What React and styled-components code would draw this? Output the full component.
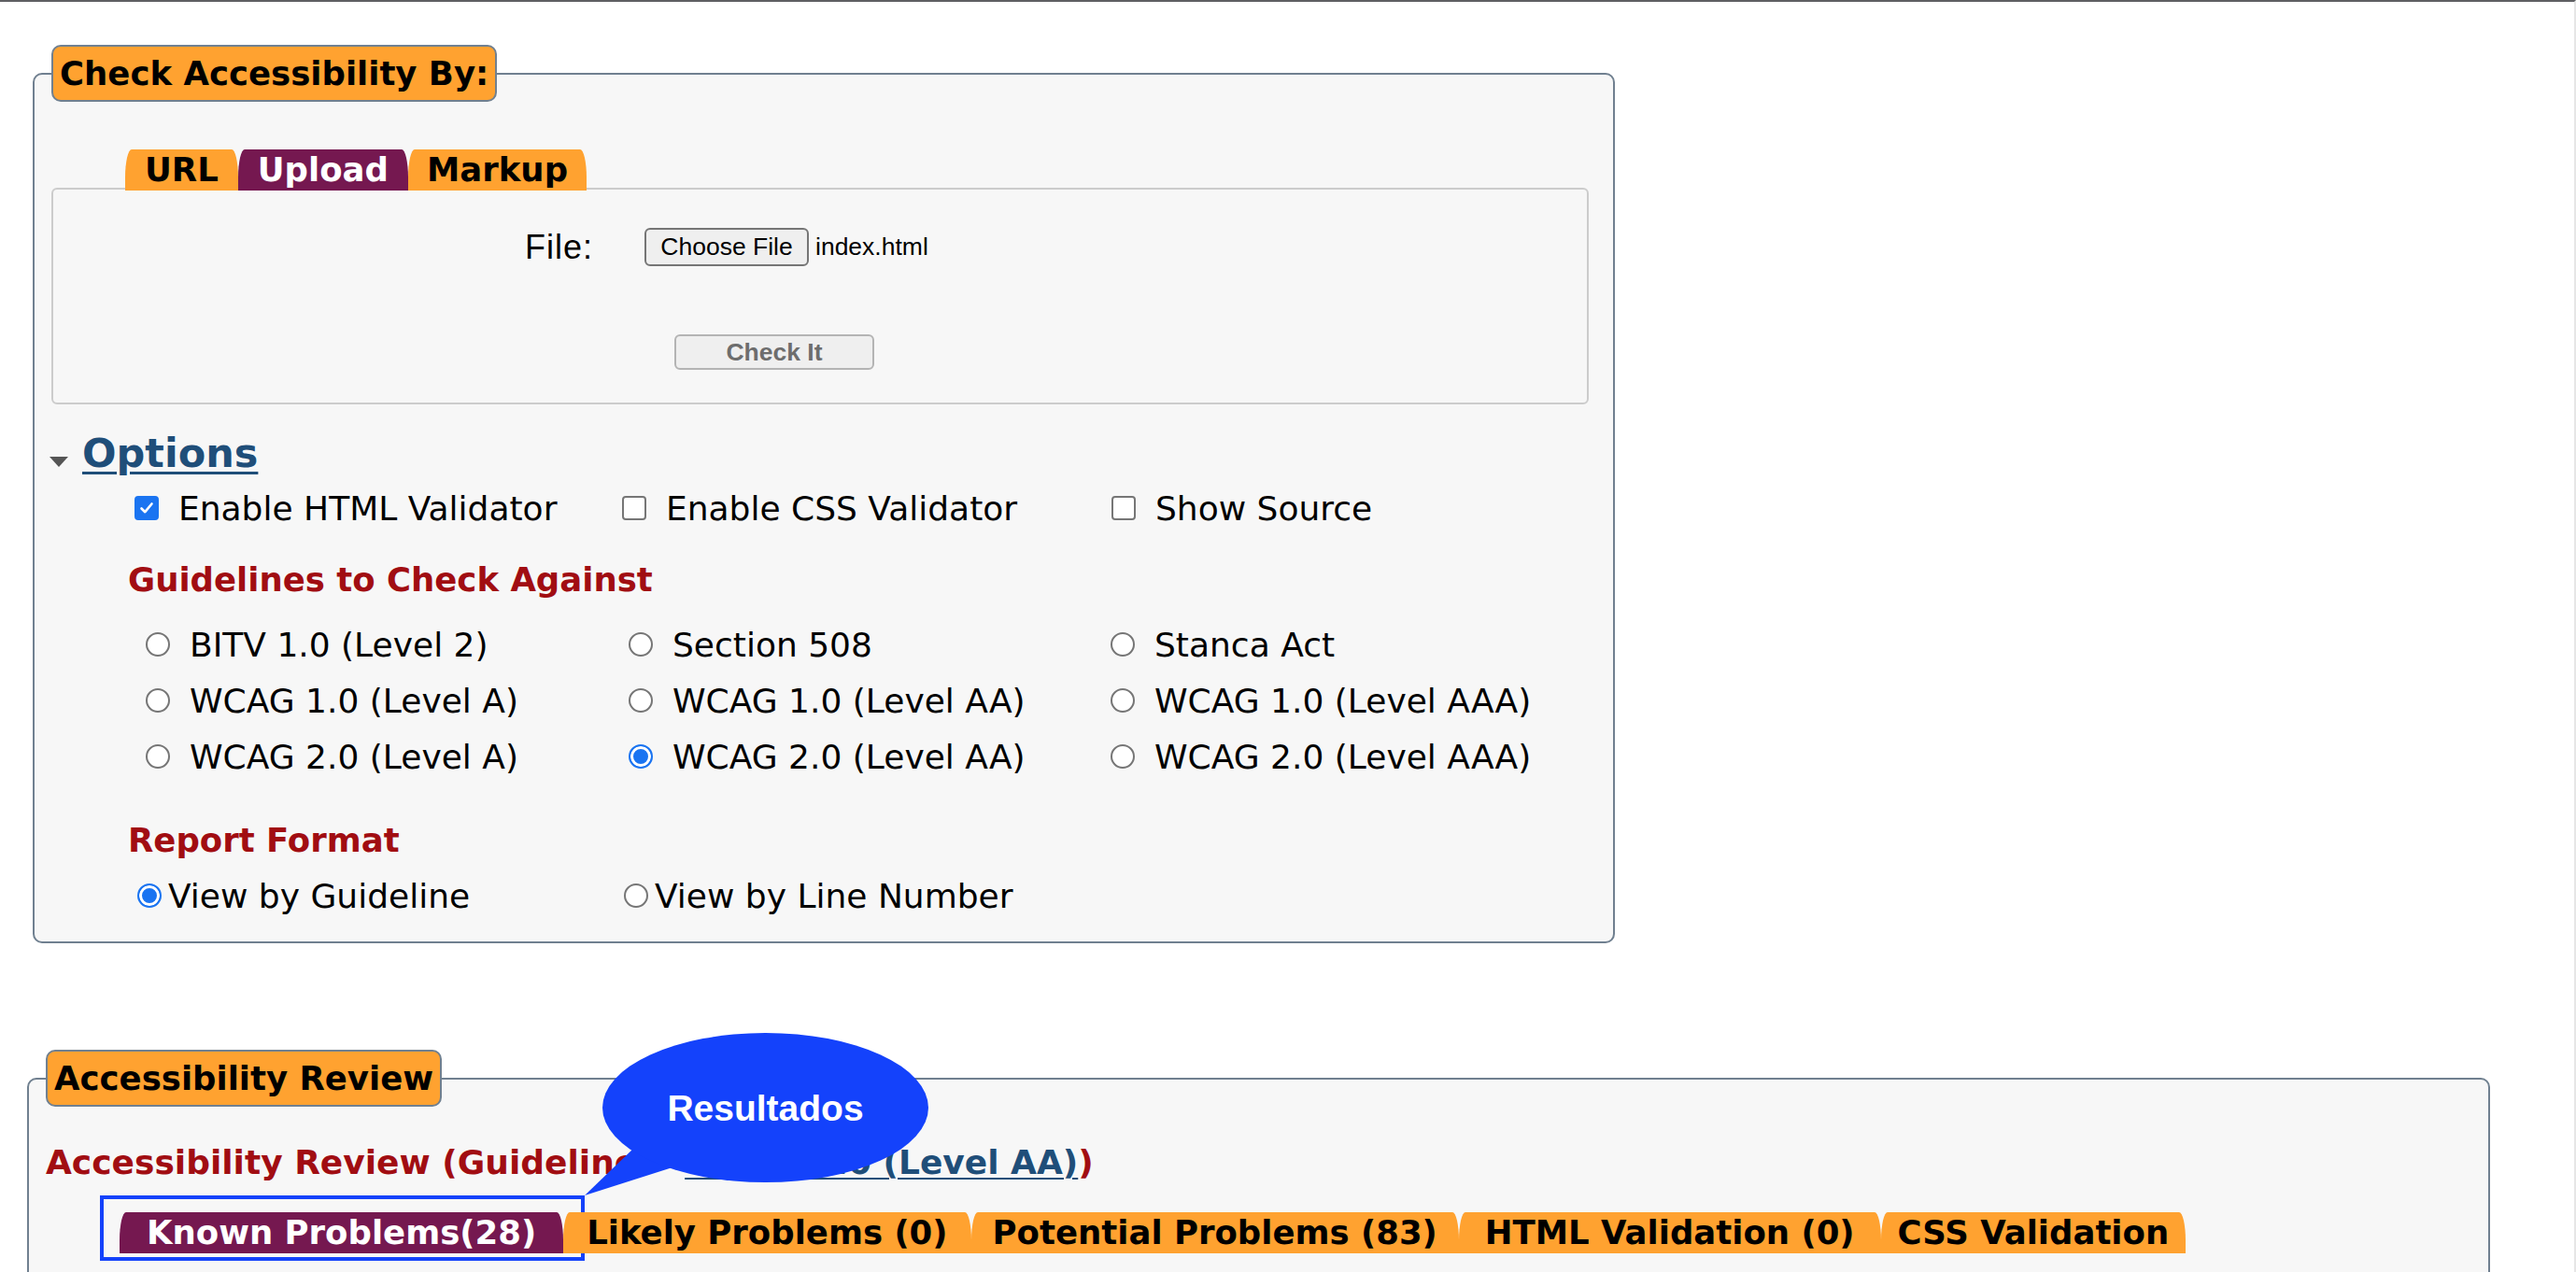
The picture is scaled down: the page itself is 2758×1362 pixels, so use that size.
import React from 'react'
import styled, { createGlobalStyle } from 'styled-components'

const GlobalStyle = createGlobalStyle`
  html, body {
    margin: 0;
    padding: 0;
    background: #fff;
  }
  body {
    font-family: "DejaVu Sans", Verdana, sans-serif;
    font-size: 36px;
    color: #000;
  }
`

const Page = styled.div`
  position: relative;
  box-sizing: border-box;
  height: 1362px;
  overflow: hidden;
  border-top: 2px solid #5e5f62;
  border-right: 2px solid #e6e6e6;
`

const Panel = styled.fieldset`
  box-sizing: border-box;
  width: ${props => props.$width}px;
  min-width: 0;
  margin: ${props => props.$top}px 0 0 ${props => props.$left}px;
  padding: 0 0 ${props => props.$bottom}px 0;
  border: 2px solid #708090;
  border-radius: 10px;
  background: #f7f7f7;
`

const Legend = styled.legend`
  box-sizing: border-box;
  height: 61px;
  margin-left: 18px;
  padding: 0 7px;
  line-height: 57px;
  background: #ffa230;
  border: 2px solid #708090;
  border-radius: 10px;
  font-size: 35.5px;
  font-weight: bold;
`

const TabRow = styled.div`
  position: relative;
  z-index: 1;
  display: flex;
  margin: ${props => props.$top}px 0 ${props => props.$overlap ? '-3px' : '0'} 97px;
`

const Tab = styled.span`
  height: 44px;
  line-height: 44px;
  padding: 0 ${props => props.$pad}px;
  background: ${props => props.$active ? '#751850' : '#ffa230'};
  color: ${props => props.$active ? '#fff' : '#000'};
  font-size: 35.5px;
  font-weight: bold;
  white-space: nowrap;
  border-radius: 7px 7px 0 0 / 30px 30px 0 0;
`

const InnerBox = styled.div`
  margin: 0 26px 0 18px;
  padding: 41px 0 35px;
  border: 2px solid #cccccc;
  border-radius: 6px;
  font-family: "Liberation Sans", Arial, sans-serif;
`

const FileRow = styled.div`
  display: flex;
  align-items: center;
  height: 41px;
  padding-left: 505px;
`

const FileLabel = styled.label`
  width: 128px;
  font-size: 36px;
  letter-spacing: 1px;
`

const NativeButton = styled.button`
  box-sizing: border-box;
  width: ${props => props.$width}px;
  height: ${props => props.$height}px;
  margin: 0;
  padding: 0;
  background: #efefef;
  border: 2px solid ${props => props.$disabled ? '#b4b4b4' : '#767676'};
  border-radius: 6px;
  font-family: "Liberation Sans", Arial, sans-serif;
  font-size: 26.5px;
  font-weight: ${props => props.$disabled ? 'bold' : 'normal'};
  color: ${props => props.$disabled ? '#6d6d6d' : '#000'};
`

const FileName = styled.span`
  margin-left: 7px;
  font-size: 26.5px;
`

const SubmitRow = styled.div`
  display: flex;
  align-items: flex-start;
  height: 38px;
  margin-top: 73px;
  padding-left: 665px;
`

const OptionsRow = styled.div`
  display: flex;
  align-items: center;
  gap: 15px;
  height: 52px;
  margin: 26px 0 0 16px;
`

const Caret = styled.span`
  width: 0;
  height: 0;
  margin-top: 19px;
  border-left: 10px solid transparent;
  border-right: 10px solid transparent;
  border-top: 11px solid #555;
`

const OptionsLink = styled.a`
  font-size: 43px;
  font-weight: bold;
  line-height: 52px;
  color: #1f4e79;
  text-decoration: underline;
  text-decoration-thickness: 3px;
  text-underline-offset: 5px;
`

const ChoiceGrid = styled.div`
  display: grid;
  grid-template-columns: ${props => props.$cols};
  grid-auto-rows: ${props => props.$row}px;
  align-items: center;
  margin: ${props => props.$top}px 0 0 ${props => props.$left}px;
`

const Choice = styled.label`
  display: flex;
  align-items: center;
  gap: ${props => props.$gap}px;
  white-space: nowrap;
`

const BoxMark = styled.span`
  box-sizing: border-box;
  display: inline-flex;
  align-items: center;
  justify-content: center;
  width: 26px;
  height: 26px;
  border-radius: 4px;
  border: 2px solid ${props => props.$checked ? '#1a74f1' : '#767676'};
  background: ${props => props.$checked ? '#1a74f1' : '#fff'};
`

const Radio = styled.input.attrs({ type: 'radio' })`
  appearance: none;
  box-sizing: border-box;
  width: 26px;
  height: 26px;
  margin: 0;
  border-radius: 50%;
  border: 2px solid #767676;
  background: #fff;
  &:checked {
    border-color: #1a74f1;
    background: #1a74f1;
    box-shadow: inset 0 0 0 3px #fff;
  }
`

const SectionTitle = styled.div`
  margin: ${props => props.$top}px 0 0 ${props => props.$left}px;
  line-height: 42px;
  font-size: ${props => props.$size || 35.5}px;
  font-weight: bold;
  color: #a10d12;
  white-space: nowrap;
`

const GuideLink = styled.a`
  margin-left: 24px;
  color: #1f4e79;
  text-decoration: underline;
  text-decoration-thickness: 2px;
  text-underline-offset: 4px;
`

const Highlight = styled.div`
  position: absolute;
  left: 107px;
  top: 1278px;
  width: 519px;
  height: 70px;
  box-sizing: border-box;
  border: 4px solid #1442fb;
`

const Bubble = styled.svg`
  position: absolute;
  left: 600px;
  top: 1098px;
`

function CheckBox({ checked, children }) {
  return (
    <Choice $gap={21}>
      <BoxMark $checked={checked}>
        {checked && (
          <svg width="16" height="16" viewBox="0 0 16 16">
            <path d="M2.5 8.5 L6.3 12.2 L13.5 3.5" fill="none" stroke="#fff" strokeWidth="2.6" strokeLinecap="round" strokeLinejoin="round" />
          </svg>
        )}
      </BoxMark>
      {children}
    </Choice>
  )
}

const guidelines = [
  ['BITV 1.0 (Level 2)', false],
  ['Section 508', false],
  ['Stanca Act', false],
  ['WCAG 1.0 (Level A)', false],
  ['WCAG 1.0 (Level AA)', false],
  ['WCAG 1.0 (Level AAA)', false],
  ['WCAG 2.0 (Level A)', false],
  ['WCAG 2.0 (Level AA)', true],
  ['WCAG 2.0 (Level AAA)', false],
]

const reviewTabs = [
  ['Known Problems(28)', true, 29],
  ['Likely Problems (0)', false, 25],
  ['Potential Problems (83)', false, 23],
  ['HTML Validation (0)', false, 28],
  ['CSS Validation', false, 18],
]

export default function App() {
  return (
    <Page>
      <GlobalStyle />
      <Panel $width={1694} $left={35} $top={46} $bottom={28}>
        <Legend>Check Accessibility By:</Legend>
        <TabRow $top={51} $overlap>
          <Tab $pad={21}>URL</Tab>
          <Tab $pad={21} $active>Upload</Tab>
          <Tab $pad={20}>Markup</Tab>
        </TabRow>
        <InnerBox>
          <FileRow>
            <FileLabel>File:</FileLabel>
            <NativeButton $width={176} $height={41}>Choose File</NativeButton>
            <FileName>index.html</FileName>
          </FileRow>
          <SubmitRow>
            <NativeButton $width={214} $height={38} $disabled>Check It</NativeButton>
          </SubmitRow>
        </InnerBox>

        <OptionsRow>
          <Caret />
          <OptionsLink>Options</OptionsLink>
        </OptionsRow>
        <ChoiceGrid $cols="522px 524px auto" $row={42} $top={12} $left={107}>
          <CheckBox checked>Enable HTML Validator</CheckBox>
          <CheckBox>Enable CSS Validator</CheckBox>
          <CheckBox>Show Source</CheckBox>
        </ChoiceGrid>

        <SectionTitle $top={35} $left={100}>Guidelines to Check Against</SectionTitle>
        <ChoiceGrid $cols="517px 516px auto" $row={60} $top={18} $left={119}>
          {guidelines.map(([label, checked]) => (
            <Choice key={label} $gap={21}>
              <Radio name="gid" defaultChecked={checked} />
              {label}
            </Choice>
          ))}
        </ChoiceGrid>

        <SectionTitle $top={39} $left={100}>Report Format</SectionTitle>
        <ChoiceGrid $cols="521px auto" $row={42} $top={17} $left={110}>
          <Choice $gap={7}>
            <Radio name="format" defaultChecked />
            View by Guideline
          </Choice>
          <Choice $gap={7}>
            <Radio name="format" />
            View by Line Number
          </Choice>
        </ChoiceGrid>
      </Panel>

      <Panel $width={2637} $left={29} $top={114} $bottom={300}>
        <Legend>Accessibility Review</Legend>
        <SectionTitle $top={39} $left={18} $size={36}>
          Accessibility Review (Guideline: <GuideLink>WCAG 2.0 (Level AA)</GuideLink>)
        </SectionTitle>
        <TabRow $top={32}>
          {reviewTabs.map(([label, active, pad]) => (
            <Tab key={label} $pad={pad} $active={active}>{label}</Tab>
          ))}
        </TabRow>
      </Panel>

      <Highlight />
      <Bubble width="400" height="190" viewBox="0 0 400 190">
        <polygon points="80,128 120,150 26,180" fill="#1442fb" />
        <ellipse cx="219.5" cy="86" rx="174.5" ry="80" fill="#1442fb" />
        <text x="219.5" y="100" textAnchor="middle" fill="#fff" fontFamily="'Liberation Sans', Arial, sans-serif" fontWeight="bold" fontSize="39">Resultados</text>
      </Bubble>
    </Page>
  )
}
